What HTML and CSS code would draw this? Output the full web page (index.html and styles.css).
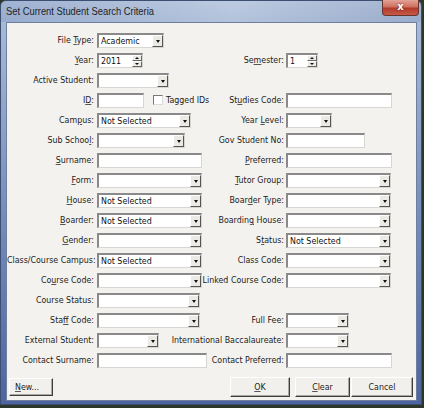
FILE: index.html
```html
<!DOCTYPE html>
<html>
<head>
<meta charset="utf-8">
<link rel="stylesheet" href="styles.css">
</head>
<body>
<div class="window">
  <div class="titlebar">
    <span class="title">Set Current Student Search Criteria</span>
    <span class="close">x</span>
  </div>
  <div class="client">
    <div class="form">
      <div class="row">
        <span class="l1">File <u>T</u>ype:</span>
        <div class="c1"><div class="field select" style="width:67px"><span class="val">Academic</span><span class="dd"><i></i></span></div></div>
        <span class="l2"></span><div class="c2"></div>
      </div>
      <div class="row">
        <span class="l1"><u>Y</u>ear:</span>
        <div class="c1"><div class="field spin" style="width:46px"><span class="val">2011</span><span class="sb"><b class="up"><i></i></b><b class="dn"><i></i></b></span></div></div>
        <span class="l2">Se<u>m</u>ester:</span>
        <div class="c2"><div class="field spin" style="width:32px"><span class="val">1</span><span class="sb"><b class="up"><i></i></b><b class="dn"><i></i></b></span></div></div>
      </div>
      <div class="row">
        <span class="l1">Active Student:</span>
        <div class="c1"><div class="field select" style="width:72px"><span class="val"></span><span class="dd"><i></i></span></div></div>
        <span class="l2"></span><div class="c2"></div>
      </div>
      <div class="row">
        <span class="l1">I<u>D</u>:</span>
        <div class="c1"><div class="field" style="width:47px"></div><span class="check"></span><span class="chk-label">Tagged IDs</span></div>
        <span class="l2">St<u>u</u>dies Code:</span>
        <div class="c2"><div class="field" style="width:106px"></div></div>
      </div>
      <div class="row">
        <span class="l1">Cam<u>p</u>us:</span>
        <div class="c1"><div class="field select" style="width:94px"><span class="val">Not Selected</span><span class="dd"><i></i></span></div></div>
        <span class="l2">Year <u>L</u>evel:</span>
        <div class="c2"><div class="field select" style="width:46px"><span class="val"></span><span class="dd"><i></i></span></div></div>
      </div>
      <div class="row">
        <span class="l1">Sub Schoo<u>l</u>:</span>
        <div class="c1"><div class="field select" style="width:88px"><span class="val"></span><span class="dd"><i></i></span></div></div>
        <span class="l2">Gov Student No:</span>
        <div class="c2"><div class="field" style="width:79px"></div></div>
      </div>
      <div class="row">
        <span class="l1"><u>S</u>urname:</span>
        <div class="c1"><div class="field" style="width:105px"></div></div>
        <span class="l2"><u>P</u>referred:</span>
        <div class="c2"><div class="field" style="width:106px"></div></div>
      </div>
      <div class="row">
        <span class="l1"><u>F</u>orm:</span>
        <div class="c1"><div class="field select" style="width:105px"><span class="val"></span><span class="dd"><i></i></span></div></div>
        <span class="l2"><u>T</u>utor Group:</span>
        <div class="c2"><div class="field select" style="width:105px"><span class="val"></span><span class="dd"><i></i></span></div></div>
      </div>
      <div class="row">
        <span class="l1"><u>H</u>ouse:</span>
        <div class="c1"><div class="field select" style="width:105px"><span class="val">Not Selected</span><span class="dd"><i></i></span></div></div>
        <span class="l2">Boar<u>d</u>er Type:</span>
        <div class="c2"><div class="field select" style="width:105px"><span class="val"></span><span class="dd"><i></i></span></div></div>
      </div>
      <div class="row">
        <span class="l1"><u>B</u>oarder:</span>
        <div class="c1"><div class="field select" style="width:105px"><span class="val">Not Selected</span><span class="dd"><i></i></span></div></div>
        <span class="l2">Boardin<u>g</u> House:</span>
        <div class="c2"><div class="field select" style="width:105px"><span class="val"></span><span class="dd"><i></i></span></div></div>
      </div>
      <div class="row">
        <span class="l1"><u>G</u>ender:</span>
        <div class="c1"><div class="field select" style="width:105px"><span class="val"></span><span class="dd"><i></i></span></div></div>
        <span class="l2">S<u>t</u>atus:</span>
        <div class="c2"><div class="field select" style="width:105px"><span class="val">Not Selected</span><span class="dd"><i></i></span></div></div>
      </div>
      <div class="row">
        <span class="l1">Class/Course Campus:</span>
        <div class="c1"><div class="field select" style="width:105px"><span class="val">Not Selected</span><span class="dd"><i></i></span></div></div>
        <span class="l2">Class Code:</span>
        <div class="c2"><div class="field select" style="width:105px"><span class="val"></span><span class="dd"><i></i></span></div></div>
      </div>
      <div class="row">
        <span class="l1">Co<u>u</u>rse Code:</span>
        <div class="c1"><div class="field select" style="width:105px"><span class="val"></span><span class="dd"><i></i></span></div></div>
        <span class="l2">Linked Course Code:</span>
        <div class="c2"><div class="field select" style="width:105px"><span class="val"></span><span class="dd"><i></i></span></div></div>
      </div>
      <div class="row">
        <span class="l1">Course Status:</span>
        <div class="c1"><div class="field select" style="width:103px"><span class="val"></span><span class="dd"><i></i></span></div></div>
        <span class="l2"></span><div class="c2"></div>
      </div>
      <div class="row">
        <span class="l1">Sta<u>f</u>f Code:</span>
        <div class="c1"><div class="field select" style="width:103px"><span class="val"></span><span class="dd"><i></i></span></div></div>
        <span class="l2">Full Fee:</span>
        <div class="c2"><div class="field select" style="width:63px"><span class="val"></span><span class="dd"><i></i></span></div></div>
      </div>
      <div class="row">
        <span class="l1">External Student:</span>
        <div class="c1"><div class="field select" style="width:62px"><span class="val"></span><span class="dd"><i></i></span></div></div>
        <span class="l2">International Baccalaureate:</span>
        <div class="c2"><div class="field select" style="width:63px"><span class="val"></span><span class="dd"><i></i></span></div></div>
      </div>
      <div class="row">
        <span class="l1">Contact Surname:</span>
        <div class="c1"><div class="field" style="width:110px"></div></div>
        <span class="l2">Contact Preferred:</span>
        <div class="c2"><div class="field" style="width:106px"></div></div>
      </div>
    </div>
    <div class="buttons">
      <span class="button b-new"><u>N</u>ew...</span>
      <span class="spacer"></span>
      <span class="button b-ok"><u>O</u>K</span>
      <span class="button b-clear"><u>C</u>lear</span>
      <span class="button b-cancel">Cancel</span>
    </div>
  </div>
</div>
</body>
</html>
```
FILE: styles.css
```css
html, body {
  margin: 0;
  padding: 0;
}
body {
  width: 424px;
  height: 408px;
  background: #2c3629;
  overflow: hidden;
  font-family: "DejaVu Sans Condensed", "DejaVu Sans", sans-serif;
  font-size: 8.8px;
  color: #1b1b1b;
}
.window {
  width: 422px;
  height: 405px;
  box-sizing: border-box;
  background: linear-gradient(to bottom, #b7c6dd 0, #a7b9d5 22px, #7890bd 200px, #4d64a0 100%);
  border: 1px solid #3d4e73;
  border-radius: 6px 6px 0 0;
  display: flex;
  flex-direction: column;
}
.titlebar {
  height: 21px;
  display: flex;
  align-items: flex-start;
  justify-content: space-between;
  background: linear-gradient(to right, rgba(120,145,190,0.35), rgba(200,212,232,0.35) 55%, rgba(120,140,180,0.3));
  border-radius: 5px 5px 0 0;
}
.title {
  font-family: "Liberation Sans", Arial, sans-serif;
  font-size: 9.4px;
  color: #1e1e26;
  padding: 4px 0 0 5px;
  transform-origin: left top;
  transform: scaleY(1.1);
}
.close {
  width: 37px;
  height: 16px;
  margin: -1px 2px 0 0;
  box-sizing: border-box;
  border: 1px solid #6a3530;
  border-top: none;
  border-radius: 0 0 4px 4px;
  background: linear-gradient(to bottom, #e3a497 0, #d0705f 45%, #b23a2a 55%, #c65a46 100%);
  color: #fff;
  font-family: "DejaVu Sans", sans-serif;
  font-weight: bold;
  font-size: 10px;
  line-height: 13px;
  text-align: center;
  text-shadow: 0 0 2px #5a1c14;
}
.client {
  margin: 0 4px 3px 5px;
  flex: 1;
  background: #f3f2ee;
  border: 1px solid #6f7f9e;
  display: flex;
  flex-direction: column;
}
.form {
  padding-top: 7px;
  display: flex;
  flex-direction: column;
}
.row {
  display: grid;
  grid-template-columns: 90px auto 1fr 130px;
  height: 20px;
  align-items: center;
}
.l1 {
  text-align: right;
  padding-right: 3px;
  white-space: nowrap;
}
.l2 {
  text-align: right;
  padding-right: 2px;
  white-space: nowrap;
}
u {
  text-decoration: underline;
  text-decoration-color: #555;
  text-underline-offset: 1px;
}
.c1, .c2 {
  display: flex;
  align-items: center;
}
.field {
  box-sizing: border-box;
  height: 15px;
  background: #fff;
  border-style: solid;
  border-width: 2px 1px 1px 2px;
  border-color: #8a8a8a #d6d6d2 #d6d6d2 #8a8a8a;
  display: flex;
  align-items: center;
}
.val {
  flex: 1;
  padding-left: 2px;
  white-space: nowrap;
  overflow: hidden;
  color: #111;
}
.dd {
  width: 11px;
  height: 12px;
  box-sizing: border-box;
  background: #eceae4;
  border: 1px solid;
  border-color: #ffffff #555 #555 #ffffff;
  display: flex;
  align-items: center;
  justify-content: center;
}
.dd i {
  width: 0;
  height: 0;
  border-left: 2.5px solid transparent;
  border-right: 2.5px solid transparent;
  border-top: 3px solid #111;
  margin-top: 1px;
}
.sb {
  width: 10px;
  height: 12px;
  display: flex;
  flex-direction: column;
}
.sb b {
  flex: 1;
  box-sizing: border-box;
  background: #eceae4;
  border: 1px solid;
  border-color: #ffffff #666 #666 #ffffff;
  display: flex;
  align-items: center;
  justify-content: center;
}
.sb .up i {
  width: 0;
  height: 0;
  border-left: 2.5px solid transparent;
  border-right: 2.5px solid transparent;
  border-bottom: 2.5px solid #111;
}
.sb .dn i {
  width: 0;
  height: 0;
  border-left: 2.5px solid transparent;
  border-right: 2.5px solid transparent;
  border-top: 2.5px solid #111;
}
.check {
  width: 10px;
  height: 10px;
  box-sizing: border-box;
  background: #fff;
  border-style: solid;
  border-width: 1px;
  border-color: #7a7a7a #dcdcdc #dcdcdc #7a7a7a;
  margin-left: 9px;
}
.chk-label {
  margin-left: 3px;
  white-space: nowrap;
}
.buttons {
  display: flex;
  align-items: center;
  margin-top: 7px;
  padding: 0 3px 0 2px;
}
.spacer {
  flex: 1;
}
.button {
  box-sizing: border-box;
  height: 20px;
  background: #f1f0ec;
  border: 1px solid;
  border-color: #ffffff #3e3e3e #3e3e3e #ffffff;
  box-shadow: inset -1px -1px 0 #a8a8a4;
  display: flex;
  align-items: center;
  justify-content: center;
  color: #222;
}
.b-new {
  width: 44px;
  height: 18px;
  justify-content: flex-start;
  padding-left: 5px;
}
.b-ok {
  width: 60px;
}
.b-clear {
  width: 55px;
  margin-left: 5px;
}
.b-cancel {
  width: 62px;
  margin-left: 1px;
}
```
